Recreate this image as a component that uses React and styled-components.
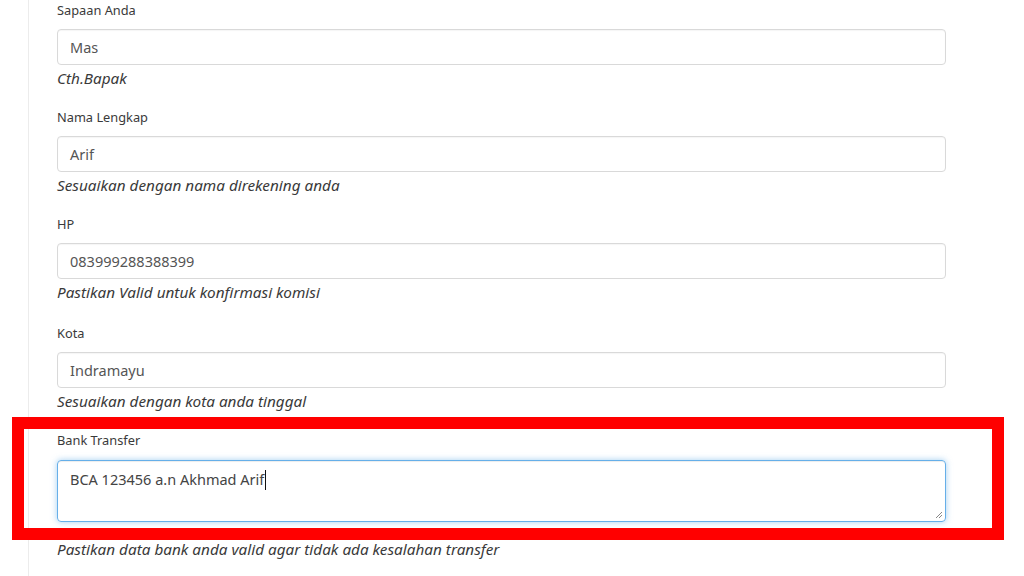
import React from "react";
import styled, { createGlobalStyle } from "styled-components";

const Global = createGlobalStyle`
  html, body { margin: 0; padding: 0; background: #ffffff; }
  body { font-family: "Noto Sans", "Open Sans", sans-serif; color: #333; }
`;

const Page = styled.div`
  width: 1024px;
  height: 576px;
  overflow: hidden;
  padding-left: 28px;
  box-sizing: border-box;
`;

const Card = styled.div`
  border-left: 1px solid #ececec;
  padding: 1px 0 0 28px;
  min-height: 100%;
  box-sizing: border-box;
`;

const Group = styled.div`
  margin-bottom: ${(p) => p.$after}px;
`;

const Label = styled.div`
  font-size: 12.8px;
  line-height: 18px;
  color: #3a3a3a;
  margin-bottom: ${(p) => p.$gap || 10}px;
`;

const Input = styled.div`
  width: 889px;
  height: 36px;
  box-sizing: border-box;
  border: 1px solid #d9d9d9;
  border-radius: 4px;
  padding: 0 12px;
  display: flex;
  align-items: center;
  font-size: 14.5px;
  color: #555;
  box-shadow: inset 0 1px 1px rgba(0, 0, 0, 0.04);
`;

const Help = styled.div`
  font-size: 15.3px;
  line-height: 20px;
  font-style: italic;
  color: #3a3a3a;
  margin-top: ${(p) => (p.$top !== undefined ? p.$top : 3)}px;
`;

const Highlight = styled.div`
  margin-top: -14px;
  margin-left: -45px;
  width: 992px;
  box-sizing: border-box;
  border: 12px solid #ff0000;
  padding: 2px 0 6px 33px;
`;

const TextArea = styled.div`
  position: relative;
  width: 889px;
  height: 62px;
  box-sizing: border-box;
  border: 1px solid #66afe9;
  border-radius: 4px;
  padding: 8px 12px;
  font-size: 14.5px;
  line-height: 20px;
  color: #444;
  box-shadow: inset 0 1px 1px rgba(0, 0, 0, 0.075), 0 0 6px rgba(102, 175, 233, 0.6);
`;

const Caret = styled.span`
  display: inline-block;
  width: 1px;
  height: 20px;
  background: #111;
  vertical-align: -5px;
  margin-left: 1px;
`;

const Grip = styled.svg`
  position: absolute;
  right: 2px;
  bottom: 2px;
`;

const fields = [
  { label: "Sapaan Anda", value: "Mas", help: "Cth.Bapak", after: 20 },
  { label: "Nama Lengkap", value: "Arif", help: "Sesuaikan dengan nama direkening anda", after: 20 },
  { label: "HP", value: "083999288388399", help: "Pastikan Valid untuk konfirmasi komisi", after: 22 },
  { label: "Kota", value: "Indramayu", help: "Sesuaikan dengan kota anda tinggal", after: 20 },
];

export default function App() {
  return (
    <>
      <Global />
      <Page>
        <Card>
          {fields.map((f) => (
            <Group key={f.label} $after={f.after}>
              <Label>{f.label}</Label>
              <Input>{f.value}</Input>
              <Help>{f.help}</Help>
            </Group>
          ))}
          <Highlight>
            <Label $gap={11}>Bank Transfer</Label>
            <TextArea>
              BCA 123456 a.n Akhmad Arif<Caret />
              <Grip width="10" height="10" viewBox="0 0 10 10">
                <path d="M9 3 L3 9 M9 6 L6 9" stroke="#888" strokeWidth="1" />
              </Grip>
            </TextArea>
          </Highlight>
          <Help $top={-1}>Pastikan data bank anda valid agar tidak ada kesalahan transfer</Help>
        </Card>
      </Page>
    </>
  );
}
